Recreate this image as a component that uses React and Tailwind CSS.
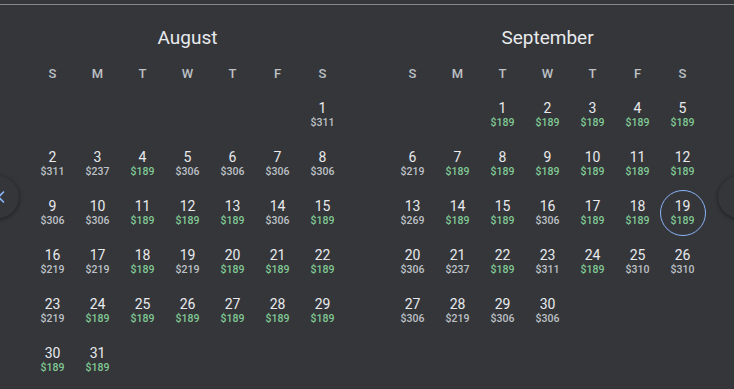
import { ChevronLeft, ChevronRight } from "lucide-react";

const DOW = ["S", "M", "T", "W", "T", "F", "S"];

// second item 1 = green (cheap) price
const AUGUST = {
  offset: 6,
  days: [
    ["$311"], ["$311"], ["$237"], ["$189", 1], ["$306"], ["$306"], ["$306"], ["$306"],
    ["$306"], ["$306"], ["$189", 1], ["$189", 1], ["$189", 1], ["$306"], ["$189", 1],
    ["$219"], ["$219"], ["$189", 1], ["$219"], ["$189", 1], ["$189", 1], ["$189", 1],
    ["$219"], ["$189", 1], ["$189", 1], ["$189", 1], ["$189", 1], ["$189", 1], ["$189", 1],
    ["$189", 1], ["$189", 1],
  ],
};

const SEPTEMBER = {
  offset: 2,
  days: [
    ["$189", 1], ["$189", 1], ["$189", 1], ["$189", 1], ["$189", 1],
    ["$219"], ["$189", 1], ["$189", 1], ["$189", 1], ["$189", 1], ["$189", 1], ["$189", 1],
    ["$269"], ["$189", 1], ["$189", 1], ["$306"], ["$189", 1], ["$189", 1], ["$189", 1],
    ["$306"], ["$237"], ["$189", 1], ["$311"], ["$189", 1], ["$310"], ["$310"],
    ["$306"], ["$219"], ["$306"], ["$306"],
  ],
  selected: 19,
};

function Month({ name, data }) {
  const cells = [];
  for (let i = 0; i < data.offset; i++) cells.push(<div key={"e" + i} className="h-[49px]" />);
  data.days.forEach(([price, cheap], i) => {
    const day = i + 1;
    const sel = data.selected === day;
    cells.push(
      <div key={day} className="h-[49px] flex items-center justify-center">
        <div
          className={
            "w-[46px] h-[46px] shrink-0 rounded-full flex flex-col items-center justify-center " +
            (sel ? "border border-[#8ab4f8]" : "")
          }
        >
          <span className="text-[14px] leading-[16px] text-[#e8eaed]">{day}</span>
          <span
            className={
              "text-[10.5px] leading-[13px] font-medium " +
              (cheap ? "text-[#81c995]" : "text-[#bdc1c6]")
            }
          >
            {price}
          </span>
        </div>
      </div>
    );
  });

  return (
    <div className="w-[315px]">
      <div className="h-[24px] text-center text-[19px] leading-[24px] text-[#e8eaed]">{name}</div>
      <div className="grid grid-cols-7 mt-[16px] mb-[8px]">
        {DOW.map((d, i) => (
          <div key={i} className="text-center text-[13px] leading-[16px] font-medium text-[#bdc1c6]">
            {d}
          </div>
        ))}
      </div>
      <div className="grid grid-cols-7">{cells}</div>
    </div>
  );
}

export default function App() {
  return (
    <div
      className="relative w-[734px] h-[389px] overflow-hidden bg-[#35363a]"
      style={{ fontFamily: "Roboto, 'Liberation Sans', sans-serif" }}
    >
      <div className="h-[4px]" />
      <div className="h-px bg-[#86878a]" />
      <div className="flex gap-[45px] pl-[30px] pt-[21px]">
        <Month name="August" data={AUGUST} />
        <Month name="September" data={SEPTEMBER} />
      </div>

      {/* Nav buttons */}
      <div className="absolute left-[-23px] top-[176px] w-[42px] h-[42px] rounded-full bg-[#35363a] shadow-[0_1px_4px_rgba(0,0,0,0.45)] flex items-center justify-end pr-[14px]">
        <ChevronLeft size={20} className="text-[#8ab4f8] translate-x-[6px]" strokeWidth={2} />
      </div>
      <div className="absolute left-[718px] top-[176px] w-[42px] h-[42px] rounded-full bg-[#35363a] shadow-[0_1px_4px_rgba(0,0,0,0.45)] flex items-center justify-start pl-[12px]">
        <ChevronRight size={20} className="text-[#8ab4f8]" strokeWidth={2} />
      </div>
    </div>
  );
}
